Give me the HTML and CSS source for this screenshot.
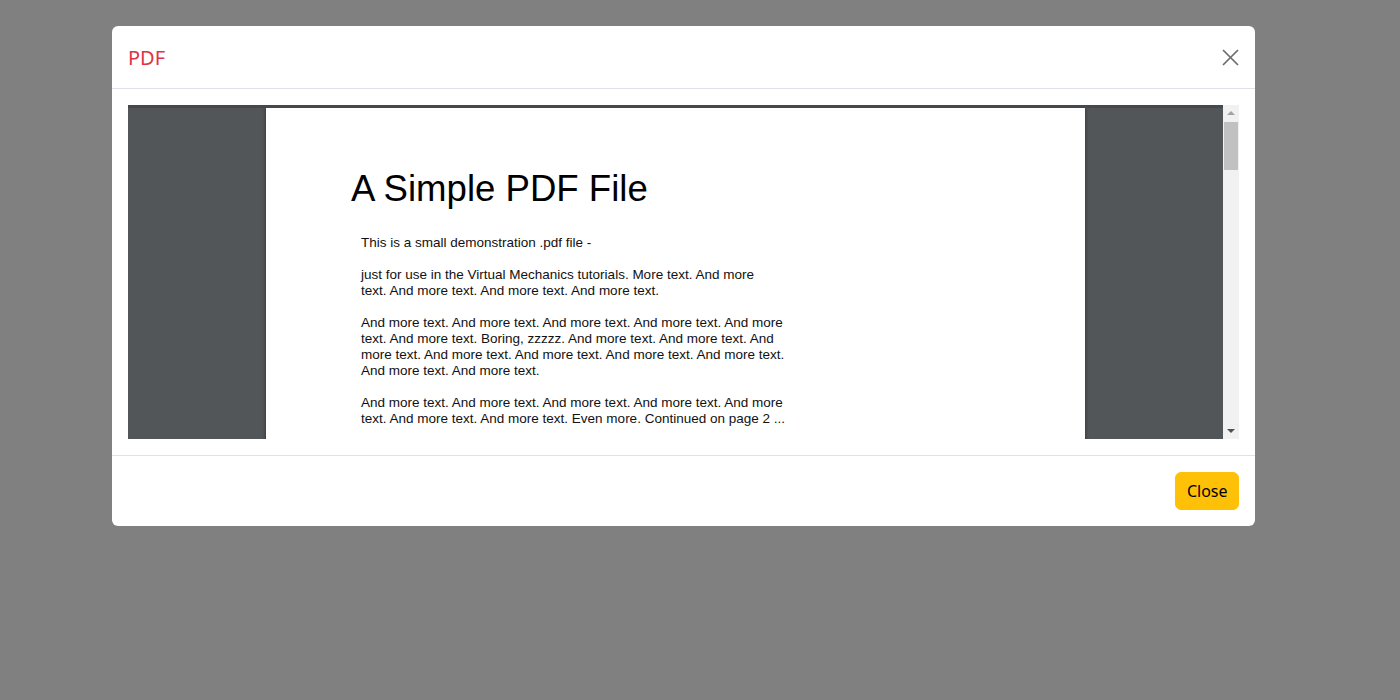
FILE: index.html
```html
<!DOCTYPE html>
<html>
<head>
<meta charset="utf-8">
<link rel="stylesheet" href="styles.css">
</head>
<body>
<div class="modal">
  <div class="modal-header">
    <h5 class="modal-title">PDF</h5>
    <button class="btn-close" aria-label="Close">
      <svg width="17" height="17" viewBox="0 0 17 17"><path d="M1 1 L16 16 M16 1 L1 16" stroke="#6c6c6c" stroke-width="1.7" fill="none"/></svg>
    </button>
  </div>
  <div class="modal-body">
    <div class="viewer">
      <div class="viewer-main">
        <div class="page">
          <h1 class="pdf-title">A Simple PDF File</h1>
          <div class="pdf-text">
            <p>This is a small demonstration .pdf file -</p>
            <p>just for use in the Virtual Mechanics tutorials. More text. And more<br>text. And more text. And more text. And more text.</p>
            <p>And more text. And more text. And more text. And more text. And more<br>text. And more text. Boring, zzzzz. And more text. And more text. And<br>more text. And more text. And more text. And more text. And more text.<br>And more text. And more text.</p>
            <p>And more text. And more text. And more text. And more text. And more<br>text. And more text. And more text. Even more. Continued on page 2 ...</p>
          </div>
        </div>
      </div>
      <div class="scrollbar">
        <div class="arrow arrow-up"></div>
        <div class="track"><div class="thumb"></div></div>
        <div class="arrow arrow-down"></div>
      </div>
    </div>
  </div>
  <div class="modal-footer">
    <button class="btn-close-footer">Close</button>
  </div>
</div>
</body>
</html>
```

FILE: styles.css
```css
html, body {
  margin: 0;
  padding: 0;
  background: #808080;
  font-family: "Noto Sans", "Open Sans", sans-serif;
}

.modal {
  margin: 26px 0 0 112px;
  width: 1143px;
  background: #fff;
  border-radius: 6px;
}

.modal-header {
  display: flex;
  justify-content: space-between;
  align-items: center;
  padding: 16px;
  border-bottom: 1px solid #dee2e6;
}

.modal-title {
  margin: 0;
  padding-top: 1px;
  height: 30px;
  box-sizing: border-box;
  font-size: 20px;
  font-weight: 400;
  line-height: 30px;
  color: #dc3545;
}

.btn-close {
  width: 17px;
  height: 17px;
  padding: 0;
  border: 0;
  background: transparent;
  display: flex;
  align-items: center;
  justify-content: center;
}

.modal-body {
  padding: 16px;
}

.viewer {
  display: flex;
  height: 334px;
  background: #525659;
}

.viewer-main {
  flex: 1;
  display: flex;
  justify-content: center;
  overflow: hidden;
  border-top: 3px solid #45494c;
  box-sizing: border-box;
}

.page {
  width: 819px;
  height: 900px;
  background: #fff;
  box-shadow: 0 0 4px rgba(0, 0, 0, 0.45);
  box-sizing: border-box;
  padding: 0 0 0 85px;
  font-family: "Liberation Sans", Arial, sans-serif;
  color: #000;
}

.pdf-title {
  margin: 57px 0 0 0;
  font-size: 36.6px;
  font-weight: 400;
  line-height: 48px;
}

.pdf-text {
  margin: 22px 0 0 10px;
  font-size: 13.5px;
  line-height: 16px;
  color: #111;
  white-space: nowrap;
}

.pdf-text p {
  margin: 0 0 16px 0;
}

.scrollbar {
  width: 16px;
  background: #f1f1f1;
  display: flex;
  flex-direction: column;
}

.arrow {
  height: 16px;
  display: flex;
  align-items: center;
  justify-content: center;
}

.arrow-up::before {
  content: "";
  border-left: 4px solid transparent;
  border-right: 4px solid transparent;
  border-bottom: 4px solid #a3a3a3;
}

.arrow-down::before {
  content: "";
  border-left: 4px solid transparent;
  border-right: 4px solid transparent;
  border-top: 4px solid #505050;
}

.track {
  flex: 1;
  padding: 1px 1px 0 1px;
}

.thumb {
  height: 48px;
  background: #c1c1c1;
}

.modal-footer {
  display: flex;
  justify-content: flex-end;
  padding: 12px;
  border-top: 1px solid #dee2e6;
}

.btn-close-footer {
  margin: 4px;
  padding: 6px 10.5px;
  font-family: "Noto Sans", "Open Sans", sans-serif;
  font-size: 16px;
  line-height: 24px;
  color: #000;
  background: #ffc107;
  border: 1px solid #ffc107;
  border-radius: 6px;
}
```
